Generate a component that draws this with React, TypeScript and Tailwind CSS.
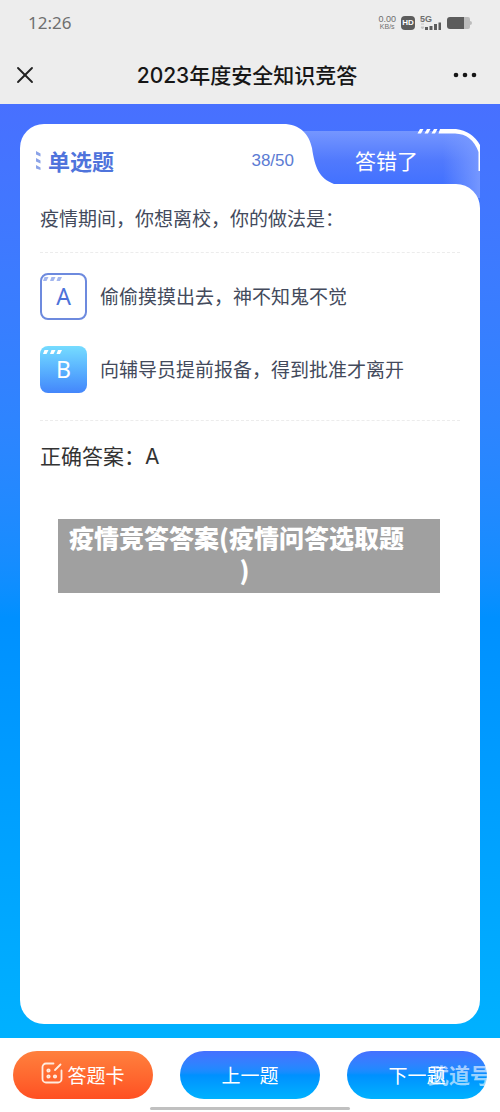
import { useState } from "react";
import { X } from "lucide-react";
import clsx from "clsx";

const options = [
  { key: "A", text: "偷偷摸摸出去，神不知鬼不觉" },
  { key: "B", text: "向辅导员提前报备，得到批准才离开" },
];

function StatusBar() {
  return (
    <div className="flex h-[45px] items-center justify-between pr-7 pl-7 text-[#6f6f6f]">
      <span className="font-['Noto_Sans'] text-[17px]">12:26</span>
      <div className="flex items-center gap-[5px]">
        <div className="flex flex-col items-center font-['Liberation_Sans'] text-[9px] leading-[8px]">
          <span>0.00</span>
          <span className="text-[7px]">KB/s</span>
        </div>
        <span className="flex h-3.5 w-3.5 items-center justify-center rounded-[4px] bg-[#5c5c5c] font-['Liberation_Sans'] text-[8px] font-bold text-white">
          HD
        </span>
        <div className="relative h-4 w-[22px]">
          <span className="absolute top-0 left-0 font-['Liberation_Sans'] text-[9px] leading-[9px] font-bold">5G</span>
          <svg className="absolute inset-0" width="22" height="16" viewBox="0 0 22 16">
            <path d="M1 9h3M1 12h3l-1.500 2z" stroke="#c4c4c4" fill="#c4c4c4" />
            <path d="M5 12h3v3H5zM9.500 11h3v4h-3zM14 9h3v6h-3zM18.500 7.500h2.500V15h-2.500z" fill="#5c5c5c" />
          </svg>
        </div>
        <svg width="25" height="14" viewBox="0 0 25 14">
          <path d="M17 1h4a2 2 0 0 1 2 2v2q2 0 2 2t-2 2v2a2 2 0 0 1-2 2h-4z" fill="#bdbdbd" />
          <path d="M3 1h14v12H3a3 3 0 0 1-3-3V4a3 3 0 0 1 3-3z" fill="#5c5c5c" />
        </svg>
      </div>
    </div>
  );
}

function NavBar() {
  return (
    <div className="flex h-[59px] items-center justify-between pr-3 pl-[11px]">
      <button type="button" aria-label="关闭" className="flex w-[41px] text-[#222]">
        <X size={28} strokeWidth={1.6} />
      </button>
      <h1 className="pt-0.5 font-['Inter','Noto_Sans_CJK_SC',sans-serif] text-[21px] font-medium text-[#161616]">
        2023年度安全知识竞答
      </h1>
      <button type="button" aria-label="更多" className="flex w-[46px] justify-center text-[#161616]">
        <svg width="24" height="6" viewBox="0 0 24 6" fill="currentColor">
          <circle cx="3" cy="3" r="2.300" />
          <circle cx="12" cy="3" r="2.300" />
          <circle cx="21" cy="3" r="2.300" />
        </svg>
      </button>
    </div>
  );
}

function ResultTab() {
  return (
    <div className="relative flex w-[197px] items-center pt-3 pl-[72px]">
      <svg className="absolute top-0 left-0" width="197" height="74" viewBox="0 0 197 74">
        <defs>
          <linearGradient id="tabFill" x1="0" y1="0" x2="0" y2="1">
            <stop offset="0" stopColor="#7596ff" />
            <stop offset="0.450" stopColor="#5079fd" />
            <stop offset="0.850" stopColor="#4070ff" />
          </linearGradient>
          <linearGradient id="tabEdge" x1="0" y1="0" x2="1" y2="0">
            <stop offset="0" stopColor="#7a9bff" stopOpacity="0" />
            <stop offset="1" stopColor="#7a9bff" stopOpacity="0.900" />
          </linearGradient>
        </defs>
        <path d="M18 7h154q17 2 25 18v49H18z" fill="url(#tabFill)" />
        <path d="M160 7h12q17 2 25 18v49H160z" fill="url(#tabEdge)" />
        <path d="M157 5h16q16 2 24 16v26h-1.500V28Q189 10 172 9.500H155.500z" fill="#fff" />
        <path d="M137 5h3.500l-2.500 4.500h-3.500zM144 5h3.500l-2.500 4.500h-3.500zM151 5h3.500l-2.500 4.500h-3.500z" fill="#fff" />
        <path d="M0 0C17 0 26 10 29 24C32 44 36 54 51 60H0z" fill="#fff" />
      </svg>
      <span className="relative text-[21px] leading-7 text-white">答错了</span>
    </div>
  );
}

function OptionBadge({ letter, active }: { letter: string; active: boolean }) {
  return (
    <span
      className={clsx(
        "relative flex h-[47px] w-[47px] shrink-0 items-center justify-center rounded-lg font-['Noto_Sans'] text-[23px]",
        active
          ? "bg-linear-to-b from-[#76dcff] to-[#4486fb] text-white"
          : "border-2 border-[#6d8ade] bg-white text-[#4c72d9]",
      )}
    >
      <svg
        className={clsx("absolute", active ? "top-1 left-[3px] text-white" : "top-0.5 left-px text-[#a3b6ee]")}
        width="19"
        height="5"
        viewBox="0 0 19 5"
        fill="currentColor"
      >
        <path d="M1.500 0h4L3.500 4H0zM8.500 0h4l-2 4H7zM15 0h4l-2 4h-3.500z" />
      </svg>
      {letter}
    </span>
  );
}

function QuestionCard() {
  const [selected, setSelected] = useState("B");

  return (
    <section className="flex flex-1 flex-col">
      <div className="flex h-[60px]">
        <div className="flex flex-1 items-center gap-[7px] rounded-tl-3xl bg-white pt-3 pl-4">
          <svg width="5" height="20" viewBox="0 0 5 20" fill="#8ba3e8">
            <path d="M0 1l4.500 2.500v3L0 4.500zM0 8l4.500 2.500v3L0 11.500zM0 15l4.500 2.500v2.500L0 18.500z" />
          </svg>
          <h2 className="text-[22px] leading-7 font-bold text-[#4f74dc]">单选题</h2>
        </div>
        <div className="relative z-10 flex items-center bg-white pt-3.5">
          <span className="-mr-[11px] font-['Liberation_Sans'] text-[17px] text-[#5b7bd3]">38/50</span>
        </div>
        <ResultTab />
      </div>
      <div className="relative flex-1 rounded-tr-3xl rounded-b-3xl bg-white px-5 pt-5">
        <p className="text-[19px] leading-7 text-[#434a5c]">疫情期间，你想离校，你的做法是：</p>
        <fieldset
          aria-label="选项"
          className="mt-5 flex flex-col gap-[26px] border-y border-dashed border-[#ececec] pt-5 pb-[27px]"
        >
          {options.map((o) => (
            <label key={o.key} className="flex cursor-pointer items-center gap-[13px] text-[19px] text-[#434a5c]">
              <input
                type="radio"
                name="answer"
                value={o.key}
                checked={selected === o.key}
                onChange={() => setSelected(o.key)}
                className="sr-only"
              />
              <OptionBadge letter={o.key} active={selected === o.key} />
              <span>{o.text}</span>
            </label>
          ))}
        </fieldset>
        <p className="mt-[22px] font-['Inter','Noto_Sans_CJK_SC',sans-serif] text-[21px] leading-7 text-[#333]">
          正确答案：A
        </p>
      </div>
    </section>
  );
}

function Footer() {
  const blue =
    "flex h-12 w-[140px] items-center justify-center rounded-full bg-linear-to-b from-[#4570ff] via-[#0090ff] to-[#00b2ff] text-[19px] text-white";
  return (
    <footer className="relative flex h-[74px] items-start justify-between bg-white px-[13px] pt-[13px]">
      <button
        type="button"
        className="flex h-12 w-[140px] items-center justify-center gap-1 rounded-full bg-linear-to-b from-[#ff803d] to-[#ff4f22] text-[19px] text-white"
      >
        <svg className="mb-1" width="22" height="22" viewBox="0 0 22 22" fill="none" stroke="#ffece0" strokeWidth="1.800" strokeLinecap="round">
          <path d="M12.500 1.500H5A3.500 3.500 0 0 0 1.500 5v12A3.500 3.500 0 0 0 5 20.500h12a3.500 3.500 0 0 0 3.500-3.500V8.500M14 8l5.500-5.500" />
          <circle cx="7.500" cy="8.500" r="1.200" />
          <circle cx="7.500" cy="14.500" r="1.200" />
          <circle cx="14" cy="14.500" r="1.200" />
        </svg>
        答题卡
      </button>
      <button type="button" className={blue}>
        上一题
      </button>
      <button type="button" className={blue}>
        下一题
      </button>
      <span className="pointer-events-none absolute top-[22px] right-[9px] text-[21px] leading-7 font-bold text-white/60">
        武道号
      </span>
      <span className="absolute bottom-0.5 left-1/2 h-[3px] w-[200px] -translate-x-1/2 rounded-full bg-[#c0c0c0]" />
    </footer>
  );
}

export default function App() {
  return (
    <div className="relative flex min-h-screen flex-col font-['Noto_Sans_CJK_SC',sans-serif]">
      <header className="bg-[#ededed]">
        <StatusBar />
        <NavBar />
      </header>
      <main className="flex flex-1 flex-col bg-linear-to-b from-[#4870ff] via-[#0090ff] via-55% to-[#00b1ff] px-5 pt-5 pb-3.5">
        <QuestionCard />
      </main>
      <Footer />
      <div className="absolute top-[519px] right-[60px] left-[58px] bg-[#a0a0a0] pt-0.5 pr-5 pb-2 pl-[11px] text-[25px] leading-8 font-black text-white">
        <span className="block">疫情竞答答案(疫情问答选取题</span>
        <span className="block text-center">)</span>
      </div>
    </div>
  );
}
